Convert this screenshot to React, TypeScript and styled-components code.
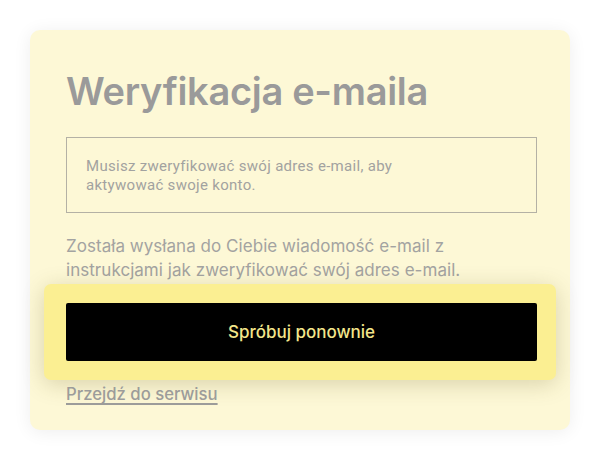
import React from "react";
import styled, { createGlobalStyle } from "styled-components";

const GlobalStyle = createGlobalStyle`
  html, body { margin: 0; padding: 0; background: #ffffff; }
  body { font-family: Inter, "Noto Sans", sans-serif; -webkit-font-smoothing: antialiased; }
`;

const Page = styled.div`
  width: 600px;
  height: 460px;
  padding: 30px;
  box-sizing: border-box;
`;

const Card = styled.div`
  width: 540px;
  height: 400px;
  box-sizing: border-box;
  background: #fdf8d6;
  border-radius: 10px;
  box-shadow: 0 2px 18px rgba(0, 0, 0, 0.07);
  padding: 38px 33px 0 36px;
  display: flex;
  flex-direction: column;
`;

const Title = styled.h1`
  margin: 0;
  font-family: Inter, sans-serif;
  font-size: 38px;
  line-height: 46px;
  font-weight: 600;
  letter-spacing: -0.3px;
  color: #9a9a9a;
`;

const Notice = styled.div`
  margin-top: 23px;
  height: 76px;
  box-sizing: border-box;
  border: 1.5px solid #b4b1a5;
  padding: 19px 19px 0;
  font-family: Roboto, sans-serif;
  font-size: 15px;
  line-height: 19px;
  letter-spacing: 0.3px;
  color: #a2a2a0;
`;

const Text = styled.p`
  margin: 21px 0 0;
  font-size: 17px;
  line-height: 24px;
  letter-spacing: 0.04px;
  color: #a3a3a1;
`;

const Spotlight = styled.div`
  margin: 2px -19px 0 -22px;
  padding: 19px 19px 19px 22px;
  background: #fbef92;
  border-radius: 7px;
  box-shadow: 0 4px 22px rgba(90, 80, 20, 0.22);
`;

const PrimaryButton = styled.button`
  display: flex;
  align-items: center;
  justify-content: center;
  width: 100%;
  height: 58px;
  border: none;
  border-radius: 2px;
  background: #000000;
  color: #f3e68b;
  font-family: Inter, sans-serif;
  font-size: 17px;
  font-weight: 500;
  cursor: pointer;
`;

const ServiceLink = styled.a`
  margin-top: 3px;
  align-self: flex-start;
  font-size: 16.7px;
  line-height: 22px;
  font-weight: 500;
  color: #9c9c9a;
  text-decoration: underline;
  text-underline-offset: 3px;
  text-decoration-thickness: 1.5px;
`;

export default function App() {
  return (
    <>
      <GlobalStyle />
      <Page>
        <Card>
          <Title>Weryfikacja e-maila</Title>
          <Notice>
            Musisz zweryfikować swój adres e-mail, aby
            <br />
            aktywować swoje konto.
          </Notice>
          <Text>
            Została wysłana do Ciebie wiadomość e-mail z
            <br />
            instrukcjami jak zweryfikować swój adres e-mail.
          </Text>
          <Spotlight>
            <PrimaryButton>Spróbuj ponownie</PrimaryButton>
          </Spotlight>
          <ServiceLink href="#">Przejdź do serwisu</ServiceLink>
        </Card>
      </Page>
    </>
  );
}
